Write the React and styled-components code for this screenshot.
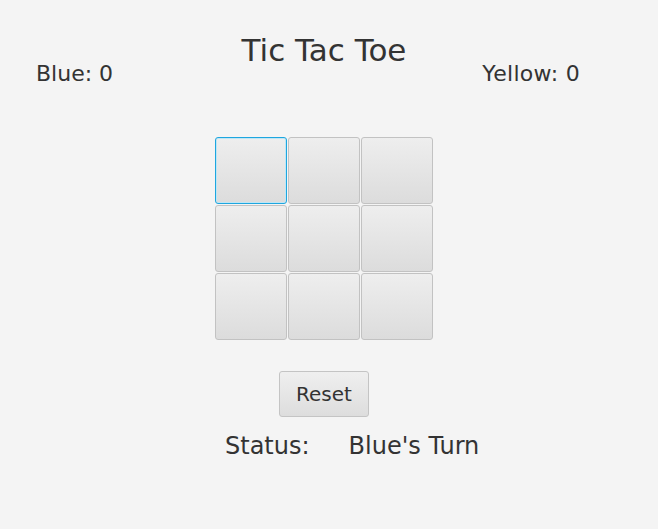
import styled, { createGlobalStyle } from "styled-components";

const GlobalStyle = createGlobalStyle`
    html, body {
        margin: 0;
        padding: 0;
        background: #f4f4f4;
    }
    body {
        font-family: "Comic Sans MS", "DejaVu Sans", sans-serif;
        color: #333333;
    }
`

export default function App() {
    const cells = Array.from({ length: 9 }, (_, i) => i);

    return (
        <Page>
            <GlobalStyle />
            <Header>
                <Score>Blue: 0</Score>
                <Title>Tic Tac Toe</Title>
                <Score className="right">Yellow:&nbsp;0</Score>
            </Header>

            <Board>
                {cells.map((i) => <Cell key={i} focused={i === 0 ? 1 : 0} />)}
            </Board>

            <ResetButton>Reset</ResetButton>

            <Status>
                <span>Status:</span>
                <span>Blue's Turn</span>
            </Status>
        </Page>
    );
}

const Page = styled.div`
    width: 658px;
    height: 529px;
    display: flex;
    flex-direction: column;
    align-items: center;
    box-sizing: border-box;
    padding-top: 32px;
`

const Header = styled.div`
    width: 100%;
    box-sizing: border-box;
    padding: 0 46px 0 36px;
    display: grid;
    grid-template-columns: 1fr auto 1fr;
    align-items: start;

    .right {
        justify-self: end;
        margin-right: 32px;
        letter-spacing: 0.3px;
    }
`

const Title = styled.h1`
    margin: 0;
    font-size: 31px;
    font-weight: 400;
    line-height: 36px;
`

const Score = styled.div`
    margin-top: 28px;
    font-size: 22px;
    line-height: 28px;
`

const Board = styled.div`
    margin-top: 49px;
    margin-left: -10px;
    display: grid;
    grid-template-columns: repeat(3, 72px);
    grid-template-rows: repeat(3, 67px);
    gap: 1px;
`

const Cell = styled.button`
    box-sizing: border-box;
    border: 1px solid ${props => props.focused ? "#1ea6df" : "#c2c2c2"};
    box-shadow: ${props => props.focused ? "inset 0 0 0 1px #bfe6f5" : "none"};
    border-radius: 3px;
    background: linear-gradient(#eeeeee, #dcdcdc);
    padding: 0;
`

const ResetButton = styled.button`
    margin-top: 31px;
    margin-left: -10px;
    width: 90px;
    height: 46px;
    box-sizing: border-box;
    border: 1px solid #c4c4c4;
    border-radius: 3px;
    background: linear-gradient(#efefef, #dddddd);
    font-family: "Comic Sans MS", "DejaVu Sans", sans-serif;
    font-size: 20px;
    color: #333333;
`

const Status = styled.div`
    align-self: flex-start;
    margin-top: 11px;
    padding-left: 225px;
    display: flex;
    gap: 39px;
    font-size: 24px;
    line-height: 36px;
`
